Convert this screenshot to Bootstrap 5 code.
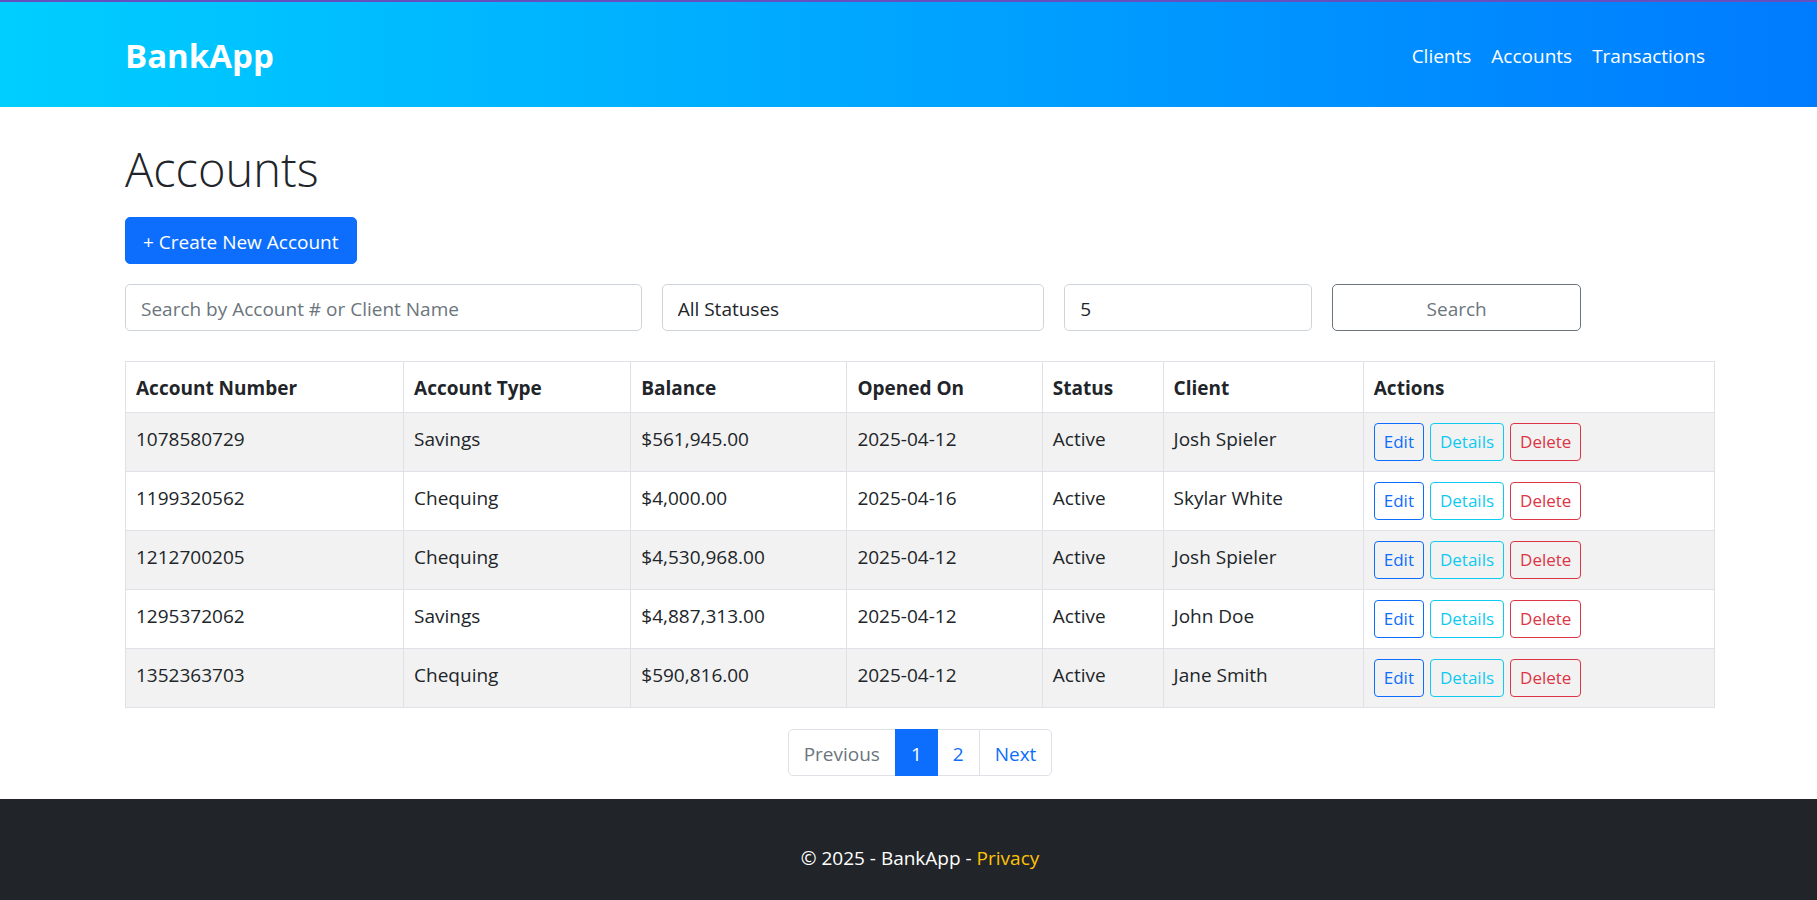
<!DOCTYPE html>
<html lang="en">
<head>
<meta charset="utf-8">
<meta name="viewport" content="width=device-width, initial-scale=1">
<title>Accounts - BankApp</title>
<link href="https://cdn.jsdelivr.net/npm/bootstrap@5.3.0/dist/css/bootstrap.min.css" rel="stylesheet">
<style>
  html { font-size: 20px; }
  body {
    font-family: "Open Sans", "Noto Sans", sans-serif;
    font-size: 19px;
    line-height: 30px;
    border-top: 2px solid #6650c0;
  }
  .page-gutter { padding-left: 125px; padding-right: 102px; }
  .site-header { background: linear-gradient(to right, #00ceff, #007bff); padding: 21px 0 19px; margin-bottom: 32px; }
  .brand-name { font-size: 33px; line-height: 53px; font-weight: 700; padding: 6px 0; }
  .site-header .nav-link { color: #fff; padding: 10px; }
  .page-title { font-size: 47px; line-height: 60px; font-weight: 300; margin-bottom: 18px; }
  .btn, .form-control, .page-link { font-size: 19px; line-height: 30px; border-radius: 5px; padding: 9px 15px 6px; height: 47px; }
  .form-control { --bs-border-color: #ced4da; }
  .form-control::placeholder { color: #6c757d; }
  .create-btn { padding-left: 17px; padding-right: 17px; }
  .btn-sm { font-size: 17px; line-height: 26px; height: 38px; padding: 5px 9px; border-radius: 4px; }
  .row-actions { gap: 6px; }
  .accounts-table { table-layout: fixed; margin-bottom: 21px; }
  .accounts-table > :not(caption) > * > * { padding: 11px 10px 9px; }
  .accounts-table > tbody > tr > td:last-child { padding: 10px; }
  .c-number { width: 17.5%; } .c-type { width: 14.3%; } .c-balance { width: 13.6%; }
  .c-opened { width: 12.3%; } .c-status { width: 7.6%; } .c-client { width: 12.6%; }
  .pagination { margin-bottom: 23px; }
  .page-item .page-link { border-radius: 0; }
  .page-item:first-child .page-link { border-radius: 5px 0 0 5px; }
  .page-item:last-child .page-link { border-radius: 0 5px 5px 0; }
  .page-item.disabled .page-link { background: #fff; color: #6c757d; }
  .site-footer { padding: 44px 0 27px; }
</style>
</head>
<body class="d-flex flex-column min-vh-100">
<header class="site-header">
  <nav class="page-gutter d-flex justify-content-between align-items-center">
    <a class="brand-name text-white text-decoration-none" href="#">BankApp</a>
    <ul class="nav">
      <li class="nav-item"><a class="nav-link" href="#">Clients</a></li>
      <li class="nav-item"><a class="nav-link" href="#">Accounts</a></li>
      <li class="nav-item"><a class="nav-link" href="#">Transactions</a></li>
    </ul>
  </nav>
</header>
<main class="page-gutter flex-grow-1">
  <h1 class="page-title">Accounts</h1>
  <button type="button" class="btn btn-primary create-btn mb-3">+ Create New Account</button>
  <form class="row gx-3 mb-4">
    <div class="col-md-4"><input type="text" class="form-control" placeholder="Search by Account # or Client Name" aria-label="Search accounts"></div>
    <div class="col-md-3"><select class="form-control" aria-label="Status"><option>All Statuses</option><option>Active</option></select></div>
    <div class="col-md-2"><select class="form-control" aria-label="Page size"><option>5</option><option>10</option></select></div>
    <div class="col-md-2"><button type="button" class="btn btn-outline-secondary w-100">Search</button></div>
  </form>
  <table class="table table-bordered table-striped accounts-table">
    <thead>
      <tr><th class="c-number">Account Number</th><th class="c-type">Account Type</th><th class="c-balance">Balance</th><th class="c-opened">Opened On</th><th class="c-status">Status</th><th class="c-client">Client</th><th>Actions</th></tr>
    </thead>
    <tbody>
      <tr><td>1078580729</td><td>Savings</td><td>$561,945.00</td><td>2025-04-12</td><td>Active</td><td>Josh Spieler</td>
        <td><div class="d-flex row-actions"><button type="button" class="btn btn-sm btn-outline-primary">Edit</button><button type="button" class="btn btn-sm btn-outline-info">Details</button><button type="button" class="btn btn-sm btn-outline-danger">Delete</button></div></td></tr>
      <tr><td>1199320562</td><td>Chequing</td><td>$4,000.00</td><td>2025-04-16</td><td>Active</td><td>Skylar White</td>
        <td><div class="d-flex row-actions"><button type="button" class="btn btn-sm btn-outline-primary">Edit</button><button type="button" class="btn btn-sm btn-outline-info">Details</button><button type="button" class="btn btn-sm btn-outline-danger">Delete</button></div></td></tr>
      <tr><td>1212700205</td><td>Chequing</td><td>$4,530,968.00</td><td>2025-04-12</td><td>Active</td><td>Josh Spieler</td>
        <td><div class="d-flex row-actions"><button type="button" class="btn btn-sm btn-outline-primary">Edit</button><button type="button" class="btn btn-sm btn-outline-info">Details</button><button type="button" class="btn btn-sm btn-outline-danger">Delete</button></div></td></tr>
      <tr><td>1295372062</td><td>Savings</td><td>$4,887,313.00</td><td>2025-04-12</td><td>Active</td><td>John Doe</td>
        <td><div class="d-flex row-actions"><button type="button" class="btn btn-sm btn-outline-primary">Edit</button><button type="button" class="btn btn-sm btn-outline-info">Details</button><button type="button" class="btn btn-sm btn-outline-danger">Delete</button></div></td></tr>
      <tr><td>1352363703</td><td>Chequing</td><td>$590,816.00</td><td>2025-04-12</td><td>Active</td><td>Jane Smith</td>
        <td><div class="d-flex row-actions"><button type="button" class="btn btn-sm btn-outline-primary">Edit</button><button type="button" class="btn btn-sm btn-outline-info">Details</button><button type="button" class="btn btn-sm btn-outline-danger">Delete</button></div></td></tr>
    </tbody>
  </table>
  <nav aria-label="Pages">
    <ul class="pagination justify-content-center">
      <li class="page-item disabled"><a class="page-link" href="#">Previous</a></li>
      <li class="page-item active"><a class="page-link" href="#">1</a></li>
      <li class="page-item"><a class="page-link" href="#">2</a></li>
      <li class="page-item"><a class="page-link" href="#">Next</a></li>
    </ul>
  </nav>
</main>
<footer class="site-footer bg-dark text-white text-center">
  <div class="page-gutter">&copy; 2025 - BankApp - <a class="text-warning text-decoration-none" href="#">Privacy</a></div>
</footer>
<script src="https://cdn.jsdelivr.net/npm/bootstrap@5.3.0/dist/js/bootstrap.bundle.min.js"></script>
</body>
</html>
